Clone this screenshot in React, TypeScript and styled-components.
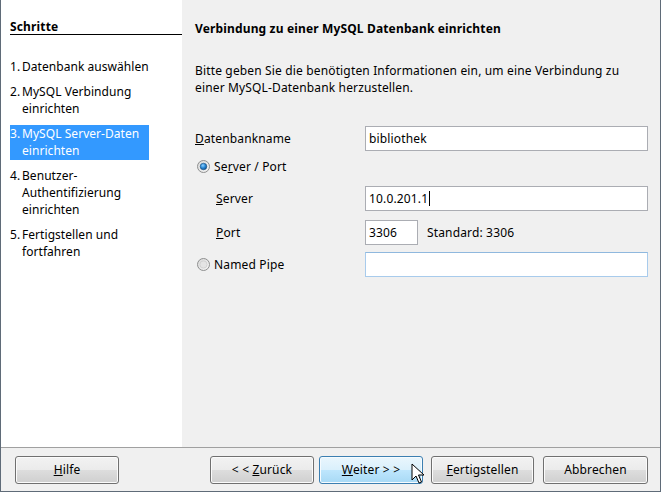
import styled, { createGlobalStyle } from "styled-components";

const GlobalStyle = createGlobalStyle`
  html, body {
    margin: 0;
    padding: 0;
    background: #f0f0f0;
  }
  body {
    font-family: "Noto Sans", "Open Sans", sans-serif;
    font-size: 12px;
    letter-spacing: 0.15px;
    color: #000;
  }
`;

const steps = [
  { n: "1.", text: "Datenbank auswählen" },
  { n: "2.", text: "MySQL Verbindung\neinrichten" },
  { n: "3.", text: "MySQL Server-Daten\neinrichten", active: true },
  { n: "4.", text: "Benutzer-\nAuthentifizierung\neinrichten" },
  { n: "5.", text: "Fertigstellen und\nfortfahren" },
];

function Radio({ checked }: { checked?: boolean }) {
  return (
    <svg width="13" height="13" viewBox="0 0 13 13">
      <defs>
        <linearGradient id={checked ? "rg1" : "rg0"} x1="0" y1="0" x2="1" y2="1">
          <stop offset="0" stopColor="#d8d8d8" />
          <stop offset="1" stopColor="#f6f6f6" />
        </linearGradient>
        <radialGradient id="dot" cx="0.4" cy="0.35" r="0.7">
          <stop offset="0" stopColor="#8fd0ff" />
          <stop offset="0.5" stopColor="#2b8ad6" />
          <stop offset="1" stopColor="#0b4a8a" />
        </radialGradient>
      </defs>
      <circle cx="6.5" cy="6.5" r="6" fill={`url(#${checked ? "rg1" : "rg0"})`} stroke="#8e8f8f" strokeWidth="1" />
      {checked ? (
        <circle cx="6.5" cy="6.5" r="3.3" fill="url(#dot)" stroke="#1c5180" strokeWidth="0.6" />
      ) : (
        <circle cx="6.5" cy="6.5" r="3.6" fill="#e4e4e4" stroke="#c6c6c6" strokeWidth="0.6" />
      )}
    </svg>
  );
}

function Pointer() {
  return (
    <svg width="14" height="22" viewBox="0 0 14 22">
      <path
        d="M1 1 L1 17 L5 13 L8 20 L10.5 19 L7.5 12 L13 12 Z"
        fill="#fff"
        stroke="#000"
        strokeWidth="1"
        strokeLinejoin="miter"
      />
    </svg>
  );
}

export default function App() {
  return (
    <>
      <GlobalStyle />
      <Window>
        <Main>
          <Sidebar>
            <SideTitle>Schritte</SideTitle>
            <StepList>
              {steps.map((s) => (
                <Step key={s.n} $active={s.active}>
                  <span>{s.n}</span>
                  <StepText>{s.text}</StepText>
                </Step>
              ))}
            </StepList>
          </Sidebar>
          <Content>
            <PageTitle>Verbindung zu einer MySQL Datenbank einrichten</PageTitle>
            <Intro>
              Bitte geben Sie die benötigten Informationen ein, um eine Verbindung zu
              <br />
              einer MySQL-Datenbank herzustellen.
            </Intro>
            <Form>
              <Row>
                <Label>
                  <u>D</u>atenbankname
                </Label>
                <Field>bibliothek</Field>
              </Row>
              <OptionRow>
                <Radio checked />
                <span>
                  Se<u>r</u>ver / Port
                </span>
              </OptionRow>
              <Row $top={11}>
                <Label $indent>
                  <u>S</u>erver
                </Label>
                <Field>
                  10.0.201.1
                  <Caret />
                </Field>
              </Row>
              <Row $top={9}>
                <Label $indent>
                  <u>P</u>ort
                </Label>
                <PortWrap>
                  <Field $small>3306</Field>
                  <span>Standard: 3306</span>
                </PortWrap>
              </Row>
              <Row $top={7}>
                <OptionLabel>
                  <Radio />
                  <span>Named Pipe</span>
                </OptionLabel>
                <Field $hover />
              </Row>
            </Form>
          </Content>
        </Main>
        <Footer>
          <Button>
            <span>
              <u>H</u>ilfe
            </span>
          </Button>
          <Spacer />
          <Button>
            <span>
              &lt; &lt; <u>Z</u>urück
            </span>
          </Button>
          <Button $hover $gap={5}>
            <span>
              <u>W</u>eiter &gt; &gt;
            </span>
            <CursorSpot>
              <Pointer />
            </CursorSpot>
          </Button>
          <Button $gap={8} $width={103}>
            <span>
              <u>F</u>ertigstellen
            </span>
          </Button>
          <Button $gap={9} $width={105}>
            <span>Abbrechen</span>
          </Button>
        </Footer>
      </Window>
    </>
  );
}

const Window = styled.div`
  width: 661px;
  height: 492px;
  box-sizing: border-box;
  border-left: 1px solid #5f6b78;
  border-right: 1px solid #5f6b78;
  border-bottom: 1px solid #5f6b78;
  display: flex;
  flex-direction: column;
  background: #f0f0f0;
  overflow: hidden;
`;

const Main = styled.div`
  height: 447px;
  display: flex;
  border-bottom: 1px solid #a0a0a0;
`;

const Sidebar = styled.div`
  width: 181px;
  background: #fff;
  padding-top: 20px;
`;

const SideTitle = styled.div`
  margin-left: 9px;
  font-weight: 700;
  line-height: 14px;
  border-bottom: 1px solid #000;
`;

const StepList = styled.div`
  margin: 23px 0 0 9px;
  display: flex;
  flex-direction: column;
  gap: 7px;
`;

const Step = styled.div<{ $active?: boolean }>`
  width: 139px;
  display: grid;
  grid-template-columns: 12px 1fr;
  line-height: 17px;
  padding-bottom: 1px;
  letter-spacing: 0.05px;
  white-space: pre;
  background: ${(p) => (p.$active ? "#3399ff" : "transparent")};
  color: ${(p) => (p.$active ? "#fff" : "#000")};
`;

const StepText = styled.span`
  white-space: pre;
`;

const Content = styled.div`
  flex: 1;
  padding: 20px 12px 0 13px;
`;

const PageTitle = styled.div`
  font-weight: 700;
  line-height: 17px;
`;

const Intro = styled.div`
  margin-top: 25px;
  line-height: 17px;
`;

const Form = styled.div`
  margin-top: 30px;
  display: flex;
  flex-direction: column;
`;

const Row = styled.div<{ $top?: number }>`
  display: grid;
  grid-template-columns: 170px 1fr;
  align-items: center;
  margin-top: ${(p) => p.$top ?? 0}px;
`;

const Label = styled.span<{ $indent?: boolean }>`
  padding-left: ${(p) => (p.$indent ? "21px" : "0")};
`;

const OptionRow = styled.div`
  display: flex;
  align-items: center;
  gap: 4px;
  height: 17px;
  margin: 7px 0 0 2px;
`;

const OptionLabel = styled.span`
  display: flex;
  align-items: center;
  gap: 4px;
  margin-left: 2px;
`;

const Field = styled.div<{ $small?: boolean; $hover?: boolean }>`
  box-sizing: border-box;
  height: 25px;
  width: ${(p) => (p.$small ? "53px" : "283px")};
  background: #fff;
  border: 1px solid ${(p) => (p.$hover ? "#a8cbec" : "#abadb3")};
  border-top-color: ${(p) => (p.$hover ? "#8fb8de" : "#abadb3")};
  padding: 0 3px;
  display: flex;
  align-items: center;
`;

const Caret = styled.span`
  display: inline-block;
  width: 1px;
  height: 15px;
  background: #000;
  margin-left: 1px;
`;

const PortWrap = styled.div`
  display: flex;
  align-items: center;
  gap: 9px;
`;

const Footer = styled.div`
  flex: 1;
  display: flex;
  align-items: flex-start;
  padding: 8px 12px 0 14px;
`;

const Spacer = styled.div`
  flex: 1;
`;

const Button = styled.div<{ $hover?: boolean; $gap?: number; $width?: number }>`
  position: relative;
  box-sizing: border-box;
  width: ${(p) => p.$width ?? 104}px;
  height: 28px;
  margin-left: ${(p) => p.$gap ?? 0}px;
  border: 1px solid ${(p) => (p.$hover ? "#3c7fb1" : "#707070")};
  border-radius: 3px;
  box-shadow: inset 0 0 0 1px ${(p) => (p.$hover ? "#f6fbfe" : "#fbfbfb")};
  background: ${(p) =>
    p.$hover
      ? "linear-gradient(#eaf6fd 0%, #d9f0fc 50%, #bee6fd 51%, #a7d9f5 100%)"
      : "linear-gradient(#f2f2f2 0%, #ebebeb 50%, #dddddd 51%, #cfcfcf 100%)"};
  display: flex;
  align-items: center;
  justify-content: center;
  line-height: 16px;
  padding-bottom: 1px;
`;

const CursorSpot = styled.span`
  position: absolute;
  left: 91px;
  top: 6px;
  line-height: 0;
`;
